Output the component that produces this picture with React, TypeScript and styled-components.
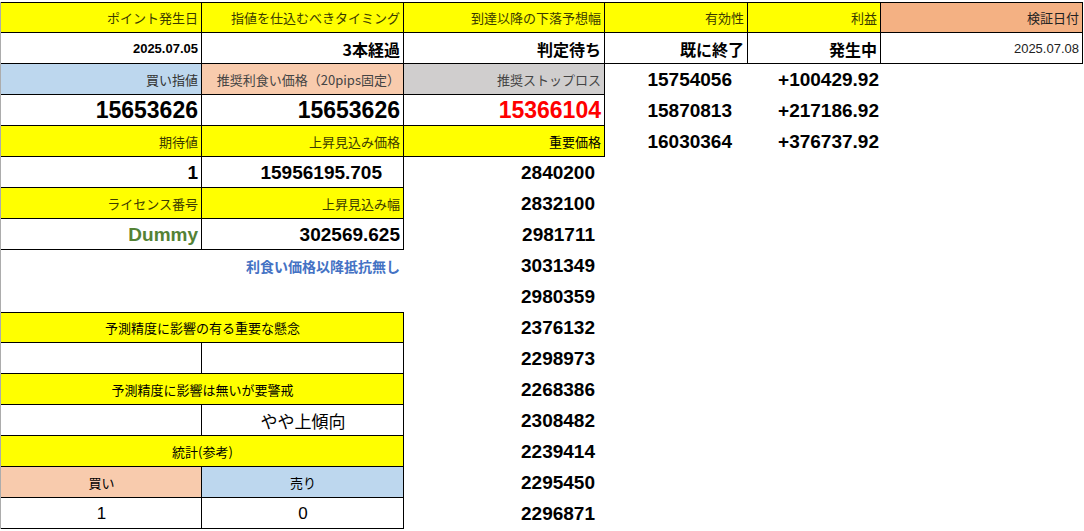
import * as React from 'react'
import styled, { createGlobalStyle } from 'styled-components'

const Global = createGlobalStyle`
  body { margin: 0; background: #fff; font-family: "Liberation Sans", "Noto Sans CJK JP", sans-serif; }
`

const Sheet = styled.div`
  display: grid;
  grid-template-columns: 201px 202px 201px 143px 133px 202px;
  grid-auto-rows: 31px;
  margin-top: 2px;
  border-left: 1px solid #acacac;
  width: 1082px;
`

type CellProps = {
  $bg?: string
  $align?: 'left' | 'center' | 'right'
  $size?: number
  $bold?: boolean
  $color?: string
  $lined?: boolean
  $top?: boolean
  $span?: number
  $pad?: number
  $jp?: boolean
}

const Cell = styled.div<CellProps>`
  display: flex;
  align-items: center;
  justify-content: ${p => p.$align === 'center' ? 'center' : p.$align === 'left' ? 'flex-start' : 'flex-end'};
  padding: 0 ${p => p.$pad ?? 4}px;
  background: ${p => p.$bg ?? 'transparent'};
  color: ${p => p.$color ?? '#000'};
  font-size: ${p => p.$size ?? 13}px;
  font-weight: ${p => p.$bold ? 700 : 400};
  font-family: ${p => p.$jp ? '"Noto Sans CJK JP", sans-serif' : '"Liberation Sans", "Noto Sans CJK JP", sans-serif'};
  grid-column: span ${p => p.$span ?? 1};
  white-space: nowrap;
  box-shadow: ${p => p.$lined ? `inset -1px -1px 0 #000${p.$top ? ', inset 0 1px 0 #000' : ''}` : 'none'};
`

const Y = '#ffff00'
const BLUE = '#bdd7ee'
const PEACH = '#f8cbad'
const GRAY = '#d0cece'
const SALMON = '#f4b183'
const HEAD = '#3b3b00'

const Head = (props: CellProps & { children?: React.ReactNode }) => (
  <Cell $bg={Y} $lined $jp $color={HEAD} {...props} />
)

const Side = styled(Cell).attrs({ $bold: true, $size: 19 })``

const important = ['2840200', '2832100', '2981711', '3031349', '2980359', '2376132', '2298973', '2268386', '2308482', '2239414', '2295450', '2296871']

const App: React.FC = () => {
  const imp = (i: number) => (
    <Side $pad={10}>{important[i]}</Side>
  )
  return (
    <>
      <Global />
      <Sheet>
        <Head $top>ポイント発生日</Head>
        <Head $top>指値を仕込むべきタイミング</Head>
        <Head $top>到達以降の下落予想幅</Head>
        <Head $top>有効性</Head>
        <Head $top>利益</Head>
        <Head $top $bg={SALMON} $color="#222">検証日付</Head>

        <Cell $lined $bold>2025.07.05</Cell>
        <Cell $lined $bold $size={16} $jp>3本経過</Cell>
        <Cell $lined $bold $size={16} $jp>判定待ち</Cell>
        <Cell $lined $bold $size={16} $jp>既に終了</Cell>
        <Cell $lined $bold $size={16} $jp>発生中</Cell>
        <Cell $lined $color="#222">2025.07.08</Cell>

        <Head $bg={BLUE} $color="#333">買い指値</Head>
        <Head $bg={PEACH} $color="#444">推奨利食い価格（20pips固定）</Head>
        <Head $bg={GRAY} $color="#444">推奨ストップロス</Head>
        <Side $pad={16}>15754056</Side>
        <Side $pad={2}>+100429.92</Side>
        <Cell />

        <Cell $lined $bold $size={23}>15653626</Cell>
        <Cell $lined $bold $size={23}>15653626</Cell>
        <Cell $lined $bold $size={23} $color="#ff0000">15366104</Cell>
        <Side $pad={16}>15870813</Side>
        <Side $pad={2}>+217186.92</Side>
        <Cell />

        <Head>期待値</Head>
        <Head>上昇見込み価格</Head>
        <Head $color="#000">重要価格</Head>
        <Side $pad={16}>16030364</Side>
        <Side $pad={2}>+376737.92</Side>
        <Cell />

        <Cell $lined $bold $size={19}>1</Cell>
        <Cell $lined $bold $size={19} $pad={22}>15956195.705</Cell>
        {imp(0)}
        <Cell $span={3} />

        <Head>ライセンス番号</Head>
        <Head>上昇見込み幅</Head>
        {imp(1)}
        <Cell $span={3} />

        <Cell $lined $bold $size={19} $color="#548235">Dummy</Cell>
        <Cell $lined $bold $size={19}>302569.625</Cell>
        {imp(2)}
        <Cell $span={3} />

        <Cell $span={2} $bold $jp $color="#4472c4" $size={14}>利食い価格以降抵抗無し</Cell>
        {imp(3)}
        <Cell $span={3} />

        <Cell $span={2} />
        {imp(4)}
        <Cell $span={3} />

        <Head $span={2} $align="center" $top $color="#000">予測精度に影響の有る重要な懸念</Head>
        {imp(5)}
        <Cell $span={3} />

        <Cell $lined />
        <Cell $lined />
        {imp(6)}
        <Cell $span={3} />

        <Head $span={2} $align="center" $color="#000">予測精度に影響は無いが要警戒</Head>
        {imp(7)}
        <Cell $span={3} />

        <Cell $lined />
        <Cell $lined $align="center" $size={17} $jp>やや上傾向</Cell>
        {imp(8)}
        <Cell $span={3} />

        <Head $span={2} $align="center" $color="#000">統計(参考)</Head>
        {imp(9)}
        <Cell $span={3} />

        <Cell $lined $bg={PEACH} $align="center" $jp>買い</Cell>
        <Cell $lined $bg={BLUE} $align="center" $jp>売り</Cell>
        {imp(10)}
        <Cell $span={3} />

        <Cell $lined $align="center" $size={17}>1</Cell>
        <Cell $lined $align="center" $size={17}>0</Cell>
        {imp(11)}
        <Cell $span={3} />
      </Sheet>
    </>
  )
}

export default App
